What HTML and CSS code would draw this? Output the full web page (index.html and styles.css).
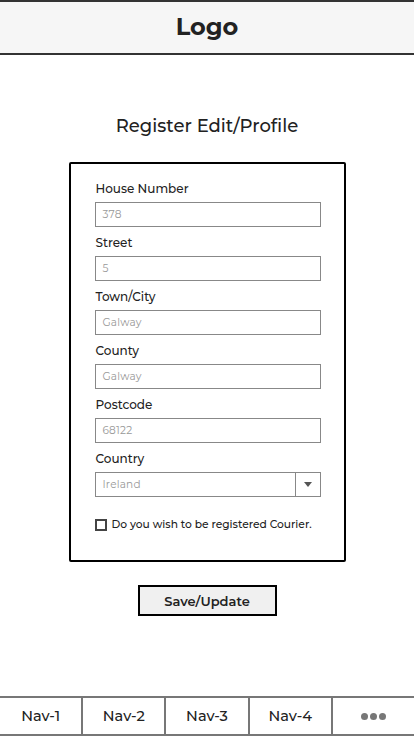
FILE: index.html
```html
<!DOCTYPE html>
<html>
<head>
<meta charset="utf-8">
<link rel="stylesheet" href="styles.css">
</head>
<body>
<header class="topbar"><span class="logo">Logo</span></header>
<main class="content">
  <h1 class="title">Register Edit/Profile</h1>
  <form class="card">
    <div class="field">
      <label class="label">House Number</label>
      <div class="input">378</div>
    </div>
    <div class="field">
      <label class="label">Street</label>
      <div class="input">5</div>
    </div>
    <div class="field">
      <label class="label">Town/City</label>
      <div class="input">Galway</div>
    </div>
    <div class="field">
      <label class="label">County</label>
      <div class="input">Galway</div>
    </div>
    <div class="field">
      <label class="label">Postcode</label>
      <div class="input">68122</div>
    </div>
    <div class="field">
      <label class="label">Country</label>
      <div class="input select"><span class="select-text">Ireland</span><span class="select-btn"><svg width="8" height="5" viewBox="0 0 8 5"><path d="M0 0H8L4 5Z" fill="#555"/></svg></span></div>
    </div>
    <div class="check-row">
      <span class="checkbox"></span>
      <span class="check-text">Do you wish to be registered Courier.</span>
    </div>
  </form>
  <button class="save" type="button">Save/Update</button>
</main>
<nav class="navbar">
  <span class="nav-item">Nav-1</span>
  <span class="nav-item">Nav-2</span>
  <span class="nav-item">Nav-3</span>
  <span class="nav-item">Nav-4</span>
  <span class="nav-item more"><i></i><i></i><i></i></span>
</nav>
</body>
</html>
```
FILE: styles.css
```css
* { box-sizing: border-box; }
html, body { margin: 0; padding: 0; }
body {
  width: 414px;
  height: 736px;
  background: #fff;
  font-family: "Montserrat", Lato, "Open Sans", sans-serif;
  color: #222;
  display: flex;
  flex-direction: column;
}
.topbar {
  height: 55px;
  flex-shrink: 0;
  background: #f6f6f6;
  border-top: 2px solid #333;
  border-bottom: 2px solid #333;
  display: flex;
  align-items: center;
  justify-content: center;
}
.logo {
  font-size: 24px;
  font-weight: 700;
  color: #222;
  line-height: 28px;
  margin-top: -2px;
}
.content {
  flex: 1;
  display: flex;
  flex-direction: column;
  align-items: center;
}
.title {
  margin: 59px 0 0;
  font-size: 18px;
  font-weight: 500;
  color: #222;
  line-height: 24px;
}
.card {
  margin-top: 24px;
  width: 277px;
  height: 400px;
  flex-shrink: 0;
  border: 2px solid #000;
  border-radius: 2px;
  padding: 16px 23px 0 24px;
  display: flex;
  flex-direction: column;
}
.field {
  display: flex;
  flex-direction: column;
  margin-bottom: 7px;
}
.label {
  font-size: 12px;
  line-height: 17px;
  color: #222;
  font-weight: 500;
  padding-left: 1px;
  margin-bottom: 5px;
}
.input {
  height: 25px;
  border: 1px solid #888;
  font-size: 10.5px;
  color: #999;
  padding-left: 7px;
  display: flex;
  align-items: center;
  letter-spacing: 0.2px;
}
.select { padding-left: 0; }
.select-text { flex: 1; padding-left: 7px; }
.select-btn {
  width: 25px;
  height: 100%;
  border-left: 1px solid #888;
  display: flex;
  align-items: center;
  justify-content: center;
}
.check-row {
  margin-top: 14px;
  display: flex;
  align-items: center;
  gap: 5px;
}
.checkbox {
  width: 12px;
  height: 12px;
  flex-shrink: 0;
  border: 2px solid #444;
}
.check-text {
  font-size: 10.7px;
  font-weight: 500;
  color: #222;
  white-space: nowrap;
}
.save {
  margin-top: 23px;
  width: 139px;
  height: 31px;
  flex-shrink: 0;
  border: 2px solid #000;
  background: #f0f0f0;
  font-family: inherit;
  font-size: 13px;
  font-weight: 600;
  color: #222;
  padding: 0;
}
.navbar {
  height: 40px;
  flex-shrink: 0;
  border-top: 2px solid #777;
  border-bottom: 2px solid #777;
  display: flex;
}
.nav-item {
  flex: 1;
  display: flex;
  align-items: center;
  justify-content: center;
  font-size: 14.5px;
  font-weight: 500;
  color: #222;
  border-left: 2px solid #777;
}
.nav-item:first-child { border-left: none; }
.more { gap: 2px; }
.more i {
  width: 7px;
  height: 7px;
  border-radius: 50%;
  background: #777;
}
```
